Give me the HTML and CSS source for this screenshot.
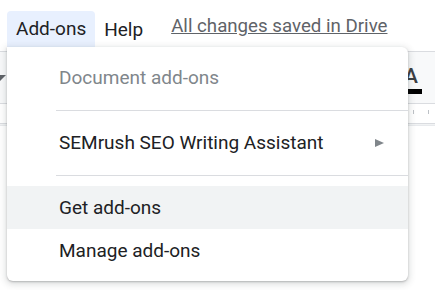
FILE: index.html
```html
<!DOCTYPE html>
<html lang="en">
  <head>
    <meta charset="UTF-8" />
    <title>Add-ons menu</title>
    <link rel="stylesheet" href="styles.css">
  </head>
  <body>
    <!-- MENU BAR -->
    <div class="menubar">
      <span class="menu-item active">Add-ons</span>
      <span class="menu-item">Help</span>
      <a class="save-status" href="#">All changes saved in Drive</a>
    </div>

    <!-- TOOLBAR (mostly hidden under the menu) -->
    <div class="toolbar">
      <span class="caret"></span>
      <span class="text-color">
        <span class="letter">A</span>
        <span class="bar"></span>
      </span>
    </div>
    <div class="ruler">
      <span class="tick"></span>
      <span class="tick"></span>
    </div>
    <div class="ruler-edge"></div>

    <!-- ADD-ONS DROPDOWN -->
    <div class="dropdown">
      <div class="row heading">Document add-ons</div>
      <div class="sep"></div>
      <div class="row">
        <span>SEMrush SEO Writing Assistant</span>
        <span class="arrow"></span>
      </div>
      <div class="sep"></div>
      <div class="row hover">Get add-ons</div>
      <div class="row">Manage add-ons</div>
    </div>
  </body>
</html>
```

FILE: styles.css
```css
/* Global */
* {
  box-sizing: border-box;
}
body {
  margin: 0;
  font-family: Roboto, "Noto Sans", sans-serif;
  background: #fff;
  color: #202124;
  overflow: hidden;
}

/* MENU BAR */
.menubar {
  display: flex;
  align-items: flex-end;
  height: 52px;
  padding-left: 7px;
  border-bottom: 1px solid #dadce0;
}
.menu-item {
  height: 35px;
  padding: 0 9px;
  display: flex;
  align-items: center;
  font-size: 19px;
  margin-bottom: 4px;
  border-radius: 4px 4px 0 0;
}
.menu-item.active {
  background: #e8f0fe;
  height: 40px;
  margin-bottom: 0;
  padding-bottom: 5px;
}
.save-status {
  color: #5f6368;
  font-size: 18.7px;
  text-decoration: underline;
  margin: 0 0 14px 19px;
}

/* TOOLBAR */
.toolbar {
  height: 52px;
  background: #f8f9fa;
  border-bottom: 1px solid #dadce0;
  display: flex;
  justify-content: space-between;
  align-items: center;
}
.caret {
  width: 0;
  height: 0;
  margin-left: -6px;
  border-left: 6px solid transparent;
  border-right: 6px solid transparent;
  border-top: 6px solid #5f6368;
}
.text-color {
  width: 31px;
  display: flex;
  flex-direction: column;
  align-items: flex-start;
  padding-top: 6px;
}
.letter {
  font-size: 21px;
  line-height: 18px;
  color: #3c4043;
  font-weight: 500;
}
.bar {
  width: 17px;
  height: 5px;
  margin: 4px 0 0 1px;
  background: #000;
}
.ruler {
  height: 20px;
  border-bottom: 1px solid #dadce0;
  display: flex;
  justify-content: flex-end;
  gap: 14px;
  padding: 6px 6px 0 0;
}
.tick {
  width: 1px;
  height: 4px;
  background: #bdc1c6;
}
.ruler-edge {
  height: 2px;
  background: #f1f3f4;
  border-bottom: 1px solid #e8eaed;
}

/* DROPDOWN */
.dropdown {
  position: absolute;
  left: 7px;
  top: 47px;
  width: 401px;
  padding: 9px 0;
  background: #fff;
  border-radius: 0 6px 6px 6px;
  box-shadow: 0 2px 6px 2px rgba(60, 64, 67, 0.15),
    0 1px 2px rgba(60, 64, 67, 0.3);
}
.row {
  height: 43px;
  padding: 0 24px 0 52px;
  display: flex;
  align-items: center;
  justify-content: space-between;
  font-size: 19px;
  color: #202124;
}
.row.heading {
  color: #80868b;
}
.row.hover {
  background: #f1f3f4;
}
.arrow {
  width: 0;
  height: 0;
  border-top: 4.5px solid transparent;
  border-bottom: 4.5px solid transparent;
  border-left: 9px solid #80868b;
}
.sep {
  height: 1px;
  margin: 11px 0 10px 49px;
  background: #dadce0;
}
```
